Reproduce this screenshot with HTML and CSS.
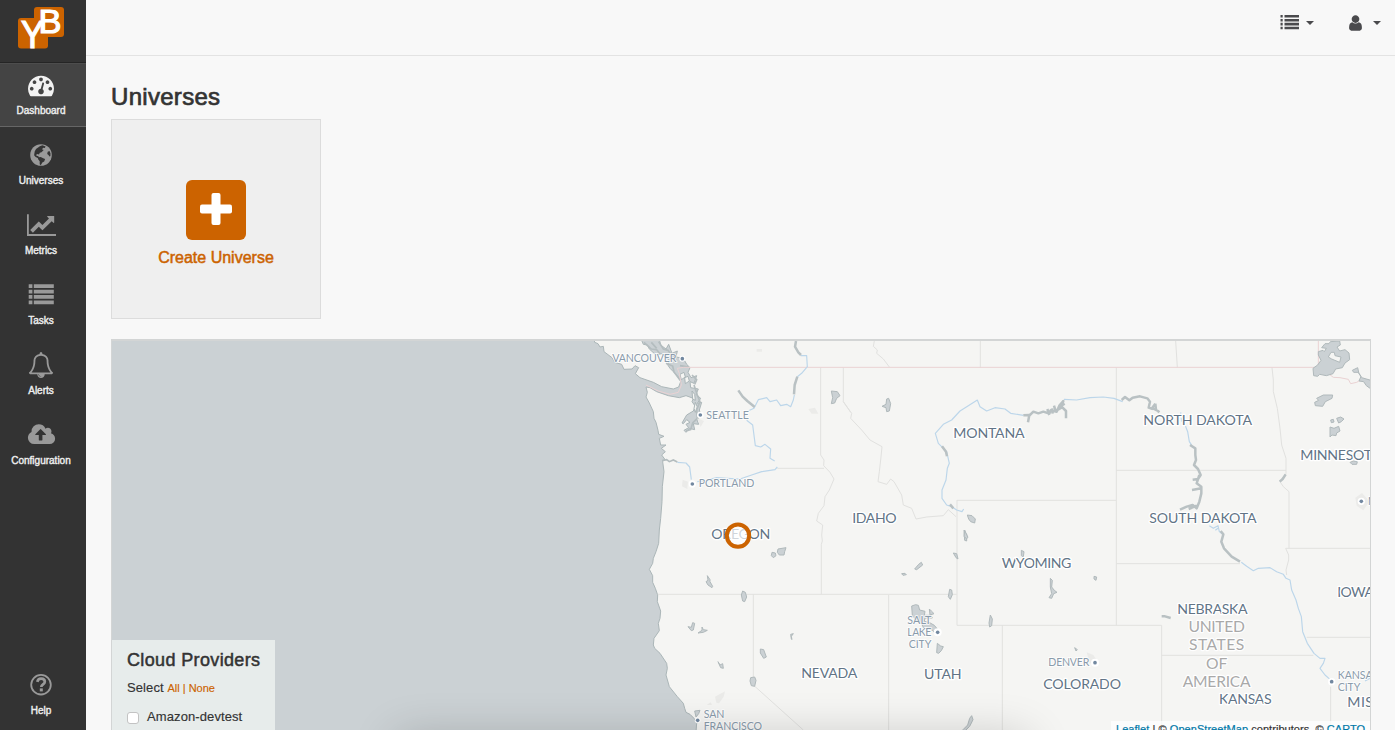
FILE: index.html
```html
<!DOCTYPE html>
<html lang="en">
<head>
<meta charset="utf-8">
<title>Dashboard</title>
<link rel="stylesheet" href="styles.css">
</head>
<body>
<div class="app">
  <nav class="sidebar">
    <div class="logo">
      <svg width="48" height="44" viewBox="17 6 48 44">
        <rect x="34" y="7" width="30" height="30" rx="3" fill="#cc6300"/>
        <rect x="18" y="18" width="30" height="30.500" rx="3" fill="#cc6300"/>
        <text class="logo-letter" x="21" y="48" font-size="38" textLength="23" lengthAdjust="spacingAndGlyphs">Y</text>
        <text class="logo-letter" x="38.500" y="33" font-size="34" textLength="23" lengthAdjust="spacingAndGlyphs">B</text>
      </svg>
    </div>
    <a class="item active"><svg class="icon" viewBox="0 0 1792 1792"><path d="M384 1152q0-53-37.500-90.500t-90.500-37.500-90.500 37.500-37.500 90.500 37.500 90.500 90.500 37.500 90.500-37.500 37.500-90.500zm192-448q0-53-37.500-90.500t-90.500-37.500-90.500 37.500-37.500 90.500 37.500 90.500 90.500 37.500 90.500-37.500 37.500-90.500zm428 481l101-382q6-26-7.500-48.500t-38.500-29.500-48 6.500-30 39.500l-101 382q-60 5-107 43.500t-63 98.500q-20 77 20 146t117 89 146-20 89-117q16-60-6-117t-72-91zm660-33q0-53-37.500-90.500t-90.500-37.500-90.500 37.500-37.500 90.500 37.500 90.500 90.500 37.500 90.500-37.500 37.500-90.500zm-640-640q0-53-37.500-90.500t-90.500-37.500-90.500 37.500-37.500 90.500 37.500 90.500 90.500 37.500 90.500-37.500 37.500-90.500zm448 192q0-53-37.500-90.500t-90.500-37.500-90.500 37.500-37.500 90.500 37.500 90.500 90.500 37.500 90.500-37.500 37.500-90.500zm320 448q0 261-141 483-19 29-54 29h-1402q-35 0-54-29-141-221-141-483 0-182 71-348t191-286 286-191 348-71 348 71 286 191 191 286 71 348z"/></svg><span>Dashboard</span></a>
    <a class="item"><svg class="icon" viewBox="0 0 26 26"><circle cx="13" cy="13" r="10.800"/><path fill="#333" d="M11.800 4.200l2.600-.9 3.200 1.200-.8 1.400-1.500-.2-1.400 1.500 1.800.8-2.200 2.300-1.700.5-.8 1.600-1.700-.4-1.100.7.5 1.200 1.500.1.600 1.200 1.900-.3 2.500 1.400 1.900.8-.9 2.500-1.900 1-.9 1.700-1.200 1-.5-1.200v-2.900l-1.400-1.700-.5-1.500-2.200-.9-1.500-1.800.6-3.800 1.300-2.500 2.100-1.500zM19.700 9.800l1.800-.9 1 2.500-.1 2.600-1 .6-.9-1.700-1.300-.8z"/></svg><span>Universes</span></a>
    <a class="item"><svg class="icon icon-wide" viewBox="0 0 2048 1792"><path d="M2048 1536v128h-2048v-1536h128v1408h1920zm-128-1248v435q0 21-19.500 29.500t-35.500-7.500l-121-121-633 633q-10 10-23 10t-23-10l-233-233-416 416-192-192 585-585q10-10 23-10t23 10l233 233 464-464-121-121q-16-16-7.500-35.500t29.500-19.500h435q14 0 23 9t9 23z"/></svg><span>Metrics</span></a>
    <a class="item"><svg class="icon" viewBox="0 0 26 26"><path d="M.7 2.300h3.700V6H.7zM5.800 2.300h20V6h-20zM.7 7.700h3.700v3.700H.7zM5.800 7.700h20v3.700h-20zM.7 13.100h3.700v3.700H.7zM5.800 13.100h20v3.700h-20zM.7 18.500h3.700v3.700H.7zM5.800 18.500h20v3.700h-20z"/></svg><span>Tasks</span></a>
    <a class="item"><svg class="icon" viewBox="0 0 1792 1792"><path d="M912 1696q0-16-16-16-59 0-101.500-42.500t-42.500-101.500q0-16-16-16t-16 16q0 73 51.500 124.500t124.500 51.500q16 0 16-16zm-666-288h1300q-266-300-266-832 0-51-24-105t-69-103-121.500-80.500-169.500-31.500-169.500 31.500-121.500 80.500-69 103-24 105q0 532-266 832zm1482 0q0 52-38 90t-90 38h-448q0 106-75 181t-181 75-181-75-75-181h-448q-52 0-90-38t-38-90q50-42 91-88t85-119.500 74.500-158.500 50-206 19.500-260q0-152 117-282.500t307-158.500q-8-19-8-39 0-40 28-68t68-28 68 28 28 68q0 20-8 39 190 28 307 158.500t117 282.500q0 139 19.500 260t50 206 74.500 158.500 85 119.500 91 88z"/></svg><span>Alerts</span></a>
    <a class="item"><svg class="icon icon-wide" viewBox="-64 0 2048 1792"><path d="M1280 864q0-14-9-23l-352-352q-9-9-23-9t-23 9l-351 351q-10 12-10 24 0 14 9 23t23 9h224v352q0 13 9.500 22.500t22.500 9.500h192q13 0 22.500-9.500t9.500-22.500v-352h224q13 0 22.500-9.500t9.500-22.500zm640 288q0 159-112.500 271.500t-271.500 112.500h-1088q-185 0-316.500-131.500t-131.500-316.500q0-130 70-240t188-165q-2-30-2-43 0-212 150-362t362-150q156 0 285.500 87t188.500 231q71-62 166-62 106 0 181 75t75 181q0 76-41 138 130 31 213.500 135.500t83.500 238.500z"/></svg><span>Configuration</span></a>
    <a class="item help"><svg class="icon" viewBox="0 0 26 26"><circle class="ring" cx="13" cy="12.700" r="9.800"/><path class="mark" d="M9.300 9.900c.5-2.300 2-3.300 4-3.200 2.200.1 3.500 1.400 3.500 3.100 0 2.600-3.500 2.600-3.500 5.200"/><rect x="11.800" y="16.400" width="3" height="3"/></svg><span>Help</span></a>
  </nav>

  <div class="main">
    <header class="topbar">
      <a class="menu"><svg width="19" height="16" viewBox="0 0 19 16"><path d="M.5 1h2.200v2.600H.5zM4.500 1H19v2.600H4.500zM.5 4.900h2.200v2.600H.5zM4.500 4.900H19v2.600H4.500zM.5 8.800h2.200v2.600H.5zM4.500 8.800H19v2.600H4.500zM.5 12.700h2.200v2.600H.5zM4.500 12.700H19v2.600H4.500z"/></svg><i class="caret"></i></a>
      <a class="menu"><svg width="13" height="16" viewBox="256 100 1280 1600"><path d="M1536 1399q0 109-62.500 187t-150.500 78h-854q-88 0-150.500-78t-62.500-187q0-85 8.500-160.500t31.500-152 58.500-131 94-89 134.500-34.500q131 128 313 128t313-128q76 0 134.500 34.500t94 89 58.500 131 31.500 152 8.500 160.500zm-256-887q0 159-112.500 271.500t-271.500 112.500-271.500-112.500-112.500-271.500 112.500-271.500 271.500-112.500 271.500 112.500 112.500 271.500z"/></svg><i class="caret"></i></a>
    </header>

    <main class="content">
      <h2>Universes</h2>
      <a class="create">
        <span class="plus"><svg width="32" height="32" viewBox="0 0 32 32"><rect x="11.500" width="9" height="32" rx="2"/><rect y="11.500" width="32" height="9" rx="2"/></svg></span>
        <span>Create Universe</span>
      </a>

      <section class="map">
        <svg class="geo" width="1258" height="389" viewBox="-1434 18 3774 1167">
          <!-- land -->
          <path class="land" d="M2400 0H205L212 30 228 42 236 28 246 55 262 48 258 66 280 70 290 88 300 98 294 112 303 128 320 122 312 145 300 140 302 158 325 162 318 178 332 190 322 205 335 202 328 225 334 245 320 252 326 268 310 266 314 284 298 280 288 292 282 286 296 278 288 268 300 262 290 254 280 266 276 264 290 240 310 228 316 214 306 200 310 190 288 182 268 188 235 182 200 170 180 158 168 156 172 172 168 186 178 204 190 230 192 250 198 262 204 286 206 298 222 304 208 310 212 330 228 330 214 340 226 350 215 360 224 372 218 380 222 410 217 455 216 500 212 550 208 585 206 625 198 650 190 670 188 685 178 703 188 722 188 742 196 760 203 780 202 800 212 828 210 850 205 865 208 887 192 910 190 930 194 940 210 955 230 985 232 1000 228 1020 238 1055 262 1085 280 1105 284 1120 288 1132 300 1138 312 1150 320 1165 318 1190H2400Z"/>
          <path class="land" d="M10 0L14 22 24 26 30 36 40 34 42 50 66 68 74 82 95 88 102 103 126 102 135 92 146 98 136 116 150 128 190 142 215 155 250 162 266 156 272 140 262 122 240 100 232 88 240 78 214 56 198 60 178 42 172 30 160 28 148 0Z"/>
          <path class="land" d="M270 118l12-6 4 14-12 8zM284 128l10-4 4 14-12 8zM306 168l8 10 2 18-8-4zM316 202l6 14-6 16-4-12z"/>
          <path class="shore" d="M162 22l22 20 16 2 10 12M184 22l16 18M206 20l14 22 14 4 12 16 14 2M228 85l20 8 4 18 18 24M270 92l26 4M306 120l14 14-6 14M312 150l10 30 8 20-10 24 2 26-14 14-6 20-14 4M216 377l14-3 8 6 12-5 12 6"/>
          <!-- state and national borders -->
          <g class="border">
            <path d="M692 98V360L702 375 701 392 720 412 732 432 718 465 705 485 702 512 685 535 680 558 698 570 695 600 697 618 694 628V778M562 400H702M760 98V200L782 232M203 778H1100M490 778V1050L640 1185M853 18L850 34 862 45 860 55 880 72 898 96M1171 18V98M760 200L785 235 782 250 815 285 840 315 876 335 872 375 868 410 864 440 890 448 902 432 912 440 935 480 940 510 965 520 978 552 1010 546 1060 542 1075 524 1098 545M1101 495V871M1101 496H1578M1101 871H1715M896 780V1190M1237 871V1190M1579 98V871M1757 18L1762 97M1579 406H2088M1579 686H1950M1715 871V1190M1715 961H2170M2046 98L2050 135 2050 170 2062 220 2070 280 2075 330 2088 370V415L2070 440 2080 455 2097 470V640M2087 640H2345M2087 640L2096 660 2096 675 2088 705 2090 720M2150 907H2345M2222 1055V1190"/>
          </g>
          <path class="nation" d="M168 150L205 168 240 178 265 172 274 150 268 115 262 100 280 97H2185V18M2214 115L2230 127 2250 128 2275 133 2282 146 2300 142 2320 130"/>
          <!-- rivers -->
          <g class="river">
            <path d="M632 62L650 62 652 95 635 115 622 125M613 180L610 195 602 215 590 208 572 212 560 195 540 200 530 188 505 194 492 220 474 228M470 256L488 270 496 332 512 336 525 328 542 342 540 370 554 378M562 396L555 404 515 410 485 420 450 432 412 430 380 428 350 436 322 440M304 434L299 396 288 384 262 382"/>
            <path d="M1121 522L1116 530 1100 525 1085 515 1070 510 1056 490 1056 465 1068 435 1072 400 1078 385 1070 350 1045 325 1036 295 1060 268 1085 255 1110 228 1135 212 1162 195 1170 215 1190 228 1215 218 1245 222 1262 235 1300 241M1422 193L1460 195 1500 188 1540 186 1572 190 1598 200M1772 232L1775 260M1786 272L1793 290 1798 320 1806 332M1858 572L1870 580 1884 572 1888 590 1898 598M1884 580L1876 586"/>
            <path d="M1954 682L1970 694 1990 707 2005 700 2040 698 2060 710 2080 718 2088 730 2100 735 2105 765 2118 795 2125 820 2134 845 2138 890 2152 925 2172 955 2190 970 2205 970 2200 985 2190 1000 2205 1020 2220 1033M2340 1030L2325 1038"/>
          </g>
          <!-- reservoirs -->
          <g class="reservoir">
            <path d="M618 18L615 35 625 52 633 60M622 125L614 150 612 178M445 166L458 185 472 198 494 216"/>
            <path d="M1056 334L1068 350 1071 364M1080 508L1090 520"/>
            <path d="M1300 241L1318 240 1314 262M1318 242L1330 230 1345 235 1360 230 1378 236 1382 226 1400 230 1408 212 1420 198 1414 214 1428 228 1428 250M1378 240L1372 222M1388 236L1386 220M1398 232L1392 212M1408 216L1424 206M1404 224L1414 218"/>
            <path d="M1595 195L1605 186 1618 196 1628 188 1650 184 1672 190 1680 200 1676 218 1688 222M1696 206L1686 220 1698 224 1696 206M1692 222L1704 228 1708 232"/>
            <path d="M1800 330L1816 340 1816 360 1818 375 1812 390 1824 402 1832 420 1824 432 1808 434M1828 420L1820 445 1834 455 1834 475 1828 500 1820 520 1808 510 1790 515 1770 524M1834 460L1806 465M1820 512L1796 522"/>
            <path d="M2087 418L2078 432 2069 440M1892 588L1900 598 1894 620 1902 640 1925 665 1950 680M1715 844L1725 844 1742 849"/>
          </g>
          <!-- lakes -->
          <g class="lake">
            <path d="M724 168l18 2 8 12-10 8-6 14-10 2 4-18zM890 192l6-2 6 16-4 22-8 2-2-12-12-4 12-6z"/>
            <path d="M1132 540l14 2 10 10-2 12-12-4-6-8zM1122 586l8 12v20l-6-2z"/>
            <path transform="translate(6 -6)" d="M558 648l24-4-4 12-2 10-14 0-6-8zM540 658l10 2 2 8-8 6-6-6z"/>
            <path d="M352 722l8 12 0 6 8 14-2 4-12-8-6-10 6-4zM458 768l8 4 4 14-6 14-6-2-4-18zM511 942l10 2 8 22-8 4-10-16zM482 1028l12-2 4 10-4 18-10-2-4-14z"/>
            <path d="M308 863l6 2-4 20-6 2-10-12 10 2zM336 876l4 8 12 2-12 6-16 2 12-8zM384 980l6 10 8-4 2 14-8-2zM602 898l8-2-6 8 2 10-2-2z"/>
            <path d="M1124 585l4 10 6 12-4 4-8-6zM1090 654l10 2 4 16-6-4zM994 682l4 8-18 14-6-2 12-14zM935 716l10-1 4 4-10 2zM1079 763l6 2 2 14-6 14-6-8zM1294 646l8 4-2 16-6-4zM1381 730l6 6-2 20 8 10 8 6-10 4-6 14-8-2 8-12-4-20zM1512 724l8 2-2 10-6-4zM1201 840l6 12-2 20-6 4-2-12z"/>
            <path d="M965 813l12-4 8 2 4 14 16 4-2 12 20 0 4 8-22 0-2 10 16 4 14 8 10 12-10 10-6-8-26-6-6-12-12-6-16-20zM1018 822l6 6 8 8-12 4zM1042 925l10 8 8 2-6 12-8 8-6-2z"/>
            <path d="M1145 1142l4 12-10 20-18 18-2-8 14-14 6-20zM1454 938l8 6-4 4zM314 1128l16-2-4 10-8 10z"/>
            <path fill-rule="evenodd" d="M2185 50l14-4 4 4 6-10-14-2 10-12 12 0 4-6 28-2 2 12-10 6 8 12 16-4 12 10 2 20-14 10-8 14-20 4-8 14-20 6-20-4-6 6-12-2-2-22 14-10 10-14-8-16zm38 2l-8 14 10 6 24 10 4-16-18-4-2-10z"/>
            <path d="M2287 106l16-8 4 18 8 12 28 8v26l-14-10-8-12-14-2 6-14-8-12-14 0zM2180 190l20-10 28 0-2 10-20 10-8 14-22-2-2-10 12-6zM2240 250l12-4 10 6-8 8-8 4zM2222 255l8-2 2 8-8 2zM2220 276l12 4 14-6 4 14-10 6-2 8-12-2-6 6zM2280 382l10-4 12 2-2 8-14 0z"/>
          </g>
          <g class="urban">
            <path d="M500 42h16v8h-16zM655 222l20-4 10 18-20 0zM322 250l20 8-10 18zM278 434l16 6-2 22-16-8zM375 1085l30-16-4 16-14 20-8-2zM350 1110l12-8 4 8zM2296 488l20-14 14 16 8 10-18 26-20-14zM1490 952l20 8 12 18-10 16-14-12z"/>
          </g>
          <!-- cities -->
          <g class="city">
            <g class="halo"><circle cx="277" cy="71" r="9"/><circle cx="331" cy="240" r="10"/><circle cx="307" cy="447" r="11"/><circle cx="323" cy="1156" r="9"/><circle cx="1043" cy="892" r="12"/><circle cx="1515" cy="983" r="12"/><circle cx="2314" cy="499" r="11"/><circle cx="2225" cy="1040" r="11"/></g>
            <g class="dot"><circle cx="277" cy="71" r="5.500"/><circle cx="331" cy="240" r="5.500"/><circle cx="307" cy="447" r="5.500"/><circle cx="323" cy="1156" r="5.500"/><circle cx="1043" cy="892" r="5.500"/><circle cx="1515" cy="983" r="5.500"/><circle cx="2314" cy="499" r="5.500"/><circle cx="2225" cy="1040" r="5.500"/></g>
            <text x="67" y="82" textLength="192">VANCOUVER</text>
            <text x="349" y="251" textLength="128">SEATTLE</text>
            <text x="326" y="457" textLength="167">PORTLAND</text>
            <text x="341" y="1148" textLength="62">SAN</text>
            <text x="341" y="1184" textLength="175">FRANCISCO</text>
            <text x="952" y="867" textLength="72">SALT</text>
            <text x="952" y="903" textLength="72">LAKE</text>
            <text x="956" y="939" textLength="68">CITY</text>
            <text x="1375" y="994" textLength="123">DENVER</text>
            <text x="2334" y="509">M</text>
            <text x="2243" y="1032" textLength="122">KANSAS</text>
            <text x="2243" y="1068" textLength="68">CITY</text>
          </g>
          <g class="state">
            <text x="364" y="612" textLength="177">OREGON</text>
            <text x="787" y="564" textLength="133">IDAHO</text>
            <text x="1090" y="310" textLength="214">MONTANA</text>
            <text x="1235" y="700" textLength="209">WYOMING</text>
            <text x="634" y="1029" textLength="168">NEVADA</text>
            <text x="1002" y="1032" textLength="113">UTAH</text>
            <text x="1360" y="1062" textLength="233">COLORADO</text>
            <text x="1660" y="270" textLength="326">NORTH DAKOTA</text>
            <text x="1678" y="565" textLength="322">SOUTH DAKOTA</text>
            <text x="2131" y="375" textLength="240">MINNESOTA</text>
            <text x="1762" y="837" textLength="211">NEBRASKA</text>
            <text x="2242" y="786" textLength="110">IOWA</text>
            <text x="1887" y="1107" textLength="158">KANSAS</text>
            <text x="2272" y="1116" textLength="210">MISSOURI</text>
          </g>
          <g class="country">
            <text x="1880" y="890" textLength="169" text-anchor="middle">UNITED</text>
            <text x="1880" y="946" textLength="166" text-anchor="middle">STATES</text>
            <text x="1880" y="1001" textLength="64" text-anchor="middle">OF</text>
            <text x="1880" y="1057" textLength="204" text-anchor="middle">AMERICA</text>
          </g>
          <circle class="marker" cx="444" cy="602" r="33.500"/>
        </svg>
        <div class="dock-shade"></div>
        <div class="attribution"><a>Leaflet</a> | © <a>OpenStreetMap</a> contributors, © <a>CARTO</a></div>
        <div class="providers">
          <h4>Cloud Providers</h4>
          <p>Select <a>All | None</a></p>
          <label><i class="box"></i>Amazon-devtest</label>
        </div>
      </section>
    </main>
  </div>
</div>
</body>
</html>
```
FILE: styles.css
```css
* { box-sizing: border-box; }
body {
  margin: 0;
  height: 730px;
  overflow: hidden;
  background: #f8f8f8;
  color: #333;
  font-family: "Liberation Sans", Arial, sans-serif;
}
.app { display: flex; height: 730px; }

.sidebar {
  width: 86px;
  flex: none;
  display: flex;
  flex-direction: column;
  background: #333;
}
.logo {
  height: 63px;
  padding: 6px 0 0 17px;
  border-bottom: 1px solid #252525;
  flex: none;
}
.logo svg { display: block; overflow: visible; }
.logo-letter { fill: #fff; stroke: #fff; stroke-width: 1.200px; }
.item {
  height: 64px;
  margin-bottom: 6px;
  padding: 9px 4px 0 0;
  display: flex;
  flex-direction: column;
  align-items: center;
  flex: none;
  color: #eee;
  font-size: 10px;
  line-height: 14px;
  -webkit-text-stroke: .4px #eee;
}
.item.active { background: #444; border-top: 1px solid #4d4d4d; border-bottom: 1px solid #666; padding-top: 8px; }
.item.help { margin-top: auto; margin-bottom: 3px; }
.icon { width: 26px; height: 26px; fill: #999; margin-bottom: 6px; display: block; flex: none; }
.icon-wide { width: 29px; }
.active .icon { fill: #f2f2f2; }
.ring { fill: none; stroke: #999; stroke-width: 1.8px; }
.mark { fill: none; stroke: #999; stroke-width: 2.700px; }

.main { flex: 1; min-width: 0; display: flex; flex-direction: column; }
.topbar {
  height: 56px;
  flex: none;
  border-bottom: 1px solid #e3e3e3;
  display: flex;
  justify-content: flex-end;
  gap: 35px;
  padding: 14px 14px 0 0;
}
.menu { display: flex; align-items: flex-start; }
.menu svg { display: block; fill: #4a4a4d; }
.menu + .menu svg { margin-top: 1px; }
.caret {
  margin: 7px 0 0 7px;
  border: 4px solid transparent;
  border-top-color: #4a4a4d;
  border-bottom: 0;
}
.menu + .menu .caret { margin-left: 11px; }
.content { padding: 27px 24px 0 25px; }
h2 {
  margin: 0 0 8px;
  font-size: 24px;
  line-height: 28px;
  font-weight: 400;
  letter-spacing: .3px;
  -webkit-text-stroke: .7px #333;
}
.create {
  width: 210px;
  height: 200px;
  border: 1px solid #dcdcdc;
  background: #efefef;
  display: flex;
  flex-direction: column;
  align-items: center;
  padding-top: 60px;
  color: #cc6300;
  font-size: 16px;
  line-height: 20px;
  -webkit-text-stroke: .5px #cc6300;
}
.plus {
  width: 60px;
  height: 60px;
  margin-bottom: 8px;
  padding: 12.500px 14px;
  border-radius: 6px;
  background: #cc6300;
}
.plus svg { display: block; fill: #fff; }

.map {
  position: relative;
  height: 391px;
  margin-top: 20px;
  border: 1px solid #d3d5d5;
  border-top-width: 2px;
  border-bottom: 0;
  background: #cbd1d4;
  overflow: hidden;
}
.geo { display: block; font-family: Lato, "Open Sans", sans-serif; }
.land { fill: #f5f5f3; stroke: #abb6b8; stroke-width: 3px; stroke-linejoin: round; }
.shore { fill: none; stroke: #b4bdbf; stroke-width: 5px; }
.border { fill: none; stroke: #e1e1df; stroke-width: 3px; }
.nation { fill: none; stroke: #ead2d3; stroke-width: 3px; }
.river { fill: none; stroke: #bcd6ea; stroke-width: 3.500px; stroke-linejoin: round; }
.reservoir { fill: none; stroke: #b9c1c3; stroke-width: 7.500px; stroke-linejoin: round; }
.lake { fill: #cbd1d4; stroke: #b0b9bb; stroke-width: 3px; }
.urban { fill: #ebebe9; }
.halo { fill: #fff; }
.dot { fill: #7288a0; }
.city, .state, .country { stroke-linejoin: round; }
.city text { font-size: 32px; fill: #8a9bab; stroke: rgba(255, 255, 255, .75); stroke-width: 6px; paint-order: stroke; }
.state text { font-size: 42.500px; fill: #627486; stroke: #fff; stroke-width: 8px; paint-order: stroke; }
.country text { font-size: 47px; fill: #a9a9a9; stroke: #fff; stroke-width: 7px; paint-order: stroke; }
.marker { fill: rgba(255, 255, 255, .7); stroke: #cc6300; stroke-width: 12px; }
.dock-shade {
  position: absolute;
  left: 290px;
  top: 402px;
  width: 620px;
  height: 30px;
  box-shadow: 0 0 46px 6px rgba(0, 0, 0, .2);
}
.attribution {
  position: absolute;
  left: 999px;
  right: 0;
  top: 380px;
  padding-left: 5px;
  background: rgba(255, 255, 255, .7);
  font-size: 11px;
  line-height: 16px;
  letter-spacing: .05px;
  white-space: nowrap;
  -webkit-text-stroke: .2px;
}
.attribution a { color: #0078a8; text-decoration: underline; }
.providers {
  position: absolute;
  left: 0;
  top: 299px;
  width: 163px;
  height: 110px;
  padding: 9px 0 0 15px;
  background: #e7eceb;
}
.providers h4 {
  margin: 0 0 9px;
  font-size: 18px;
  line-height: 22px;
  font-weight: 400;
  letter-spacing: .36px;
  white-space: nowrap;
  -webkit-text-stroke: .5px #333;
}
.providers p { margin: 0 0 13px; font-size: 13px; line-height: 16px; letter-spacing: .1px; -webkit-text-stroke: .15px; }
.providers p a { font-size: 11px; letter-spacing: 0; color: #cc6300; }
.providers label { display: flex; align-items: center; font-size: 13px; line-height: 16px; letter-spacing: .1px; -webkit-text-stroke: .15px; }
.box { width: 12px; height: 12px; margin: 1px 8px 0 0; border: 1px solid #c3c3c3; border-radius: 3px; background: #fff; }
```
